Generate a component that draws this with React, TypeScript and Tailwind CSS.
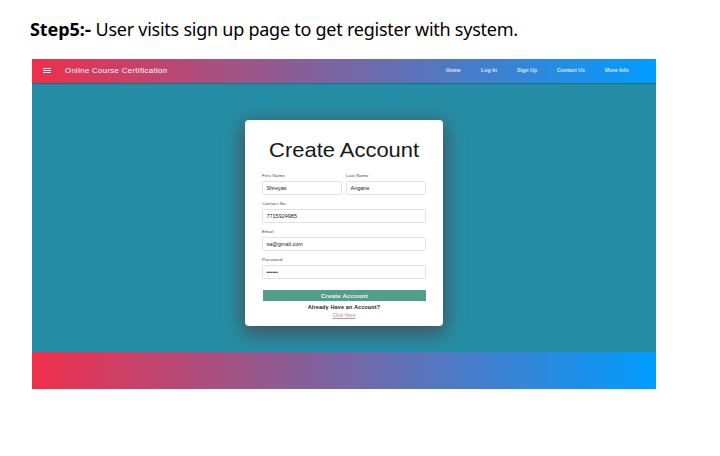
const navItems = [
  { label: "Home", cls: "w-[35px]" },
  { label: "Log In", cls: "w-[36px]" },
  { label: "Sign Up", cls: "w-[40px]" },
  { label: "Contact Us", cls: "w-[48px]" },
  { label: "More Info", cls: "w-[51px]" },
];

function Field({ label, value }: { label: string; value: string }) {
  return (
    <div className="flex-1">
      <div className="h-[8px] text-[4.4px] leading-[8px] tracking-[0.15px] text-[#444]">{label}</div>
      <div className="mt-[1px] flex h-[14px] items-center rounded-[1.5px] border border-[#e1e2e3] bg-white pl-[3.5px] text-[5.5px] text-[#222]">
        {value}
      </div>
    </div>
  );
}

export default function App() {
  return (
    <div className="h-[456px] w-[720px] overflow-hidden bg-white pl-8 font-['Liberation_Sans',Arial,sans-serif]">
      <h1 className="flex h-[59px] items-center whitespace-nowrap font-['Noto_Sans',sans-serif] text-[18px] font-normal text-black">
        <span className="-ml-[2px] w-[65.5px] font-bold tracking-[-0.1px]">
          Step5:<span className="inline-block scale-x-110">-</span>
        </span>
        <span className="tracking-[-0.25px]">User visits sign up page to get register with system.</span>
      </h1>
      <div className="flex h-[330px] w-[624px] flex-col bg-[#258ea6]">
        <header className="z-10 flex h-[24px] shrink-0 items-center bg-linear-to-r/srgb from-[#ef2f4b] to-[#009dff] text-white shadow-[0_1px_1px_rgba(0,0,0,0.2)]">
          <svg className="ml-[11px] h-[8px] w-[8px]" viewBox="0 0 8 8" stroke="white" strokeOpacity="0.9" strokeWidth="1">
            <path d="M0 1.5h8M0 3.5h8M0 5.5h8" />
          </svg>
          <span className="ml-[14px] w-[381px] whitespace-nowrap text-[7.8px] tracking-[0.34px] text-white">
            Online Course Certification
          </span>
          <nav className="flex whitespace-nowrap text-[5.3px] font-bold text-white/80">
            {navItems.map((n) => (
              <a key={n.label} className={n.cls}>{n.label}</a>
            ))}
          </nav>
        </header>
        <main className="flex flex-1 overflow-hidden pl-[213.4px] pt-[37px]">
          <section className="h-[206px] w-[197.2px] rounded-[4px] bg-white px-[16.5px] shadow-[0_5px_20px_2px_rgba(75,65,65,0.8)]">
            <h2 className="-mx-2 h-[52px] scale-x-[1.045] whitespace-nowrap pt-[17px] text-center text-[21px] leading-[26px] text-[#181818]">
              Create Account
            </h2>
            <div className="flex gap-[4px]">
              <Field label="First Name" value="Shreyas" />
              <Field label="Last Name" value="Angane" />
            </div>
            <div className="mt-[5px] flex flex-col gap-[5px]">
              <Field label="Contact No:" value="7715924985" />
              <Field label="Email" value="sa@gmail.com" />
              <Field label="Password" value="••••••" />
            </div>
            <button className="ml-[1px] mt-[11px] flex h-[11px] w-[163px] items-center justify-center bg-[#519e8a] pt-px text-[6.2px] font-bold tracking-[0.1px] text-white/90">
              Create Account
            </button>
            <p className="mt-[2px] text-center text-[5.5px] font-bold leading-[8px] tracking-[0.13px] text-[#222]">
              Already Have an Account?
            </p>
            <p className="text-center text-[5px] leading-[8px] text-[#999]">
              <a className="underline decoration-[#c793a9]">Click Here</a>
            </p>
          </section>
        </main>
        <footer className="h-[37px] shrink-0 bg-linear-to-r/srgb from-[#ef2f4b] to-[#009dff]" />
      </div>
    </div>
  );
}
